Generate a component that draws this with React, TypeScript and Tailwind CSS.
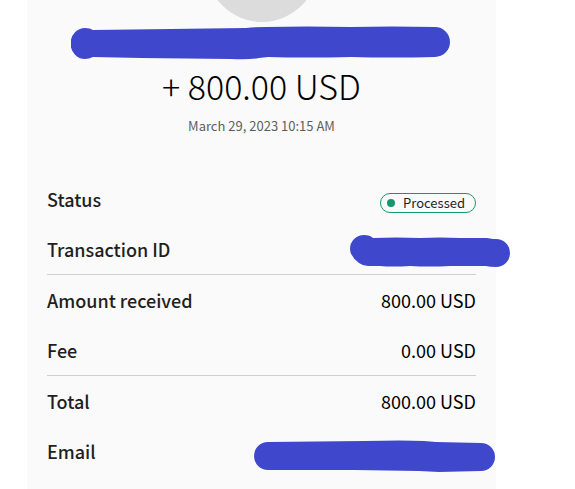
import { ReactNode } from "react"

const Scribble = ({ d, viewBox, className }: { d: string, viewBox: string, className: string }) => (
    <svg aria-hidden="true" viewBox={viewBox} className={`absolute fill-[#3f48cc] ${className}`}>
        <path d={d}/>
    </svg>
);

const groups: { label: string, value: ReactNode }[][] = [
    [
        {
            label: 'Status',
            value: <span className="mt-2 flex h-5 items-center gap-2 rounded-full border border-[#12996b] pl-1.5 pr-2.5 text-[13px] text-[#1f1f1f]">
                <span className="size-2 rounded-full bg-[#12996b]"/>
                Processed
            </span>,
        },
        {
            label: 'Transaction ID',
            value: <Scribble
                viewBox="0 0 160 32"
                className="-right-[34px] top-[11px] w-[160px] h-[32px]"
                d="M14 0C18 0 21 1 23 3Q46 2 70 3Q90 2 110 3H137L143 4H146A14 14 0 0 1 146 32Q140 32 136 31H100Q80 32 60 31Q42 32 30 31H18Q13 31 9 28Q0 21 0 14A14 14 0 0 1 14 0Z"
            />,
        },
    ],
    [
        { label: 'Amount received', value: '800.00 USD' },
        { label: 'Fee', value: '0.00 USD' },
    ],
    [
        { label: 'Total', value: '800.00 USD' },
        {
            label: 'Email',
            value: <Scribble
                viewBox="0 0 241 32"
                className="-right-[19px] top-[14px] w-[241px] h-[32px]"
                d="M14 2L110 1Q150 0 170 1L182 2L227 3A14 14 0 0 1 227 31L185 32L165 31L100 30H14A14 14 0 0 1 14 2Z"
            />,
        },
    ],
];

export default function App (){
    return <div className="min-h-screen bg-white font-['Noto_Sans_CJK_SC',sans-serif]">
        <main className="ml-[27px] mr-[79px] min-h-screen bg-[#fafafa] px-5">
            <header className="relative flex h-[174px] flex-col items-center overflow-y-clip">
                <div className="-mt-[90px] size-28 shrink-0 rounded-full bg-[#dcdcdc]"/>
                <Scribble
                    viewBox="0 0 380 34"
                    className="top-[26px] left-1/2 -ml-[191px] w-[380px] h-[34px]"
                    d="M14 2Q19 2 22 4L100 3L175 2Q185 1 195 1Q235 0 280 1Q320 0 364 1A15 15 0 0 1 364 31Q320 32 280 31Q235 32 197 31L188 32Q178 34 160 33L70 32L22 31Q18 33 14 33A14 15 0 0 1 14 2Z"
                />
                <h1 className="mt-[42px] text-[34px] leading-[44px] font-light text-black">+ 800.00 USD</h1>
                <p className="mt-2 text-[13px] leading-5 text-[#5e5e5e]">March 29, 2023 10:15 AM</p>
            </header>
            <dl className="divide-y divide-[#cfcfcf] text-lg">
                {groups.map(rows => (<div key={rows[0].label}>
                    {rows.map(item => (<div key={item.label} className="relative flex h-[50px] items-center justify-between">
                        <dt className="font-medium text-[#1f1f1f]">{item.label}</dt>
                        <dd className="text-black">{item.value}</dd>
                    </div>))}
                </div>))}
            </dl>
        </main>
    </div>
}
